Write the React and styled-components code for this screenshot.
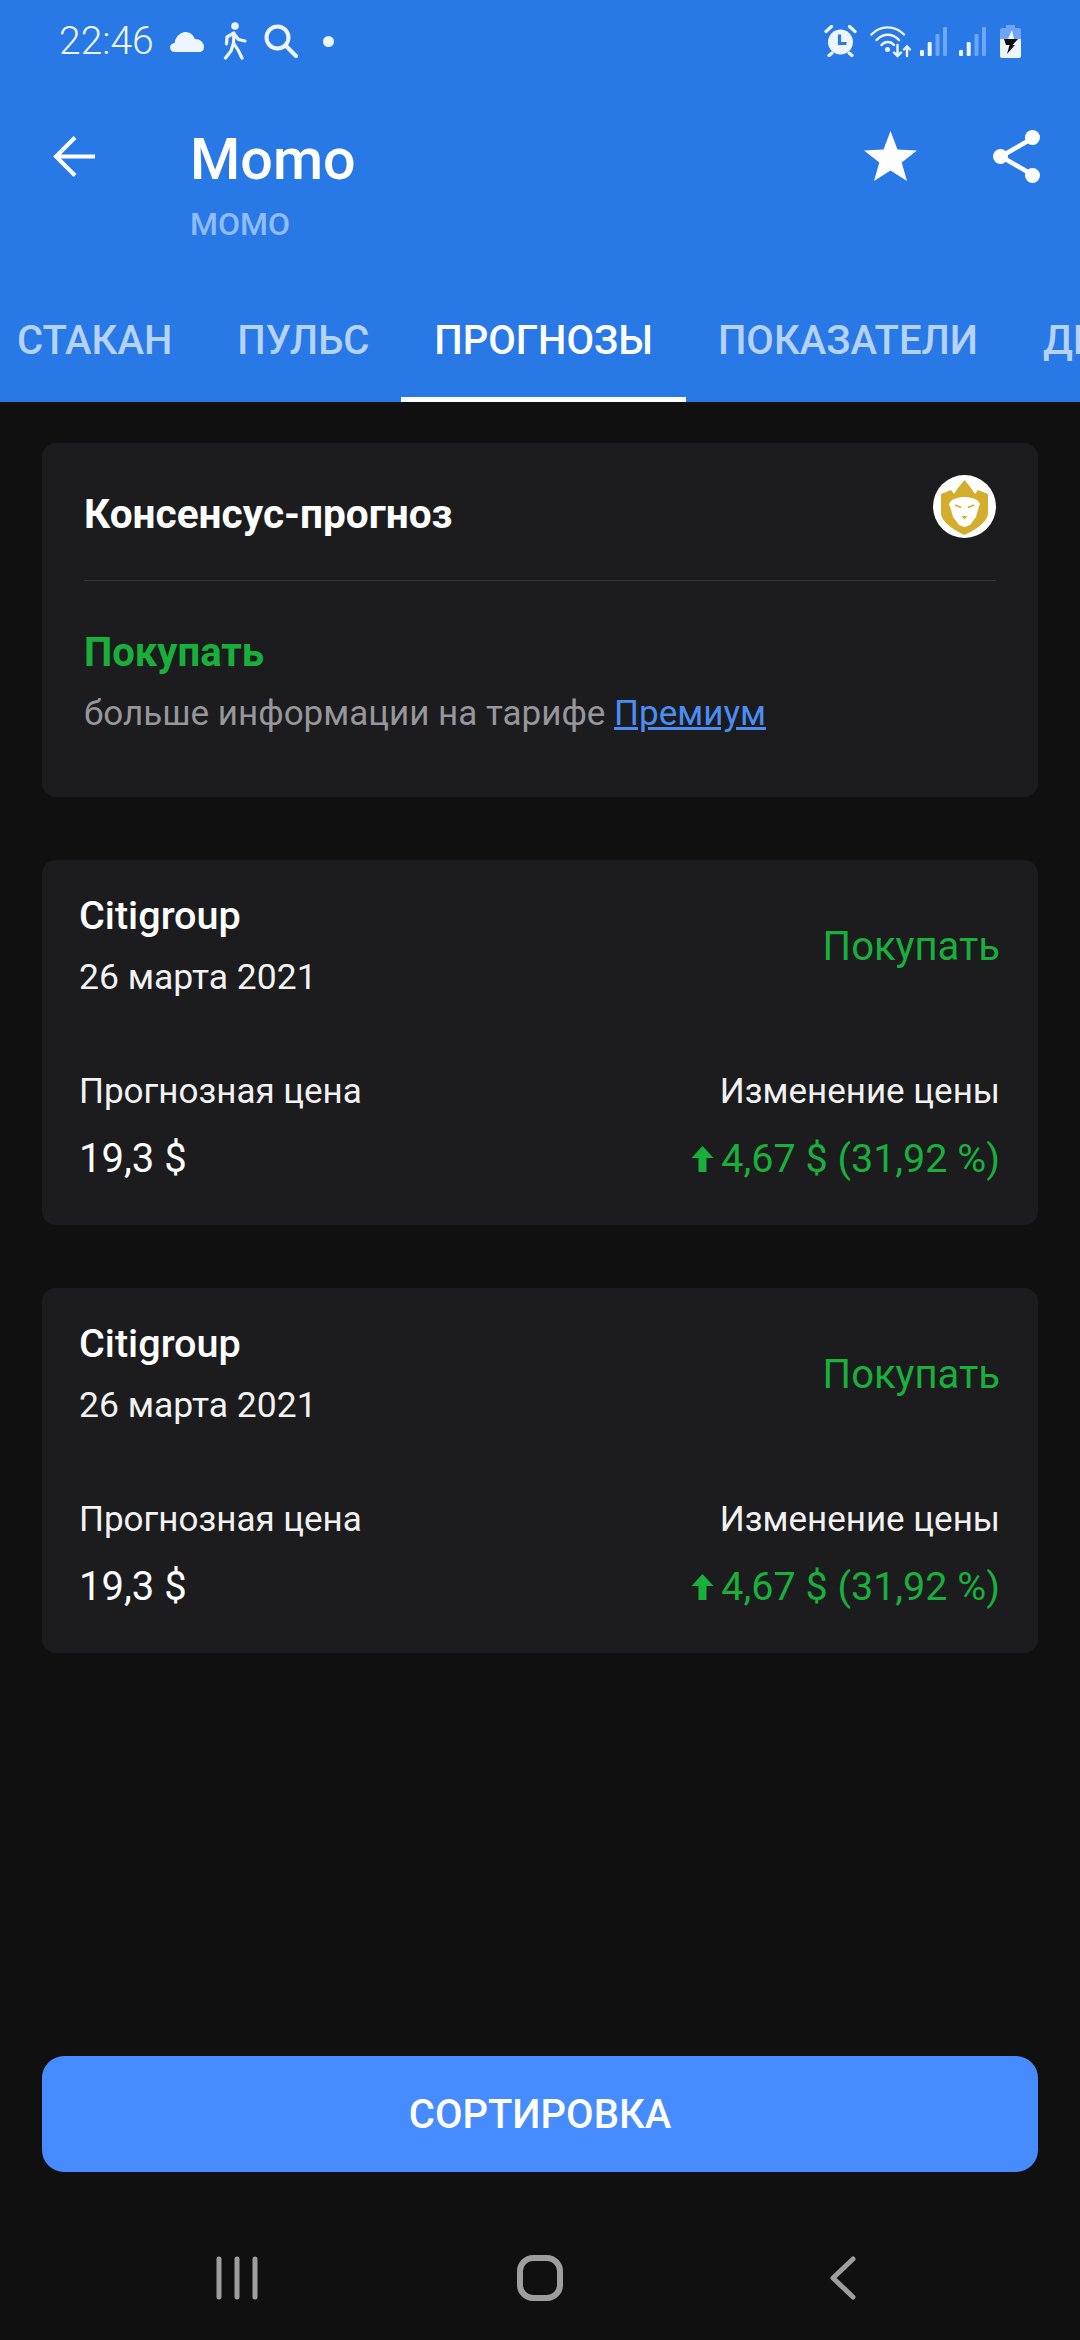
import React from 'react'
import styled, { createGlobalStyle } from 'styled-components'

const Global = createGlobalStyle`
html, body { margin: 0; padding: 0; background: #101010; }
* { box-sizing: border-box; }
`

const Page = styled.div`
width: 1080px;
height: 2340px;
display: flex;
flex-direction: column;
background: #101010;
font-family: Roboto, "Noto Sans", sans-serif;
overflow: hidden;
`
const Header = styled.header`
height: 402px;
background: #2879e6;
display: flex;
flex-direction: column;
flex-shrink: 0;
`
const StatusBar = styled.div`
height: 82px;
padding: 0 59px 0 59px;
display: flex;
align-items: center;
justify-content: space-between;
color: #eef5ff;
flex-shrink: 0;
`
const StatusGroup = styled.div`
display: flex;
align-items: center;
`
const Clock = styled.span`
font-size: 39px;
font-weight: 300;
width: 111px;
`
const Spaced = styled.span`
display: flex;
margin-left: ${p => p.$left || 0}px;
`
const Toolbar = styled.div`
height: 198px;
flex-shrink: 0;
display: flex;
align-items: flex-start;
padding: 37px 40px 0 53px;
`
const IconSlot = styled.div`
width: 137px;
height: 74px;
display: flex;
align-items: center;
flex-shrink: 0;
`
const TitleBlock = styled.div`
flex: 1;
display: flex;
flex-direction: column;
margin-top: 4px;
`
const Title = styled.div`
font-size: 57.5px;
font-weight: 500;
color: #fff;
line-height: 74px;
`
const Subtitle = styled.div`
font-size: 32px;
font-weight: 500;
color: #8fbcfb;
line-height: 40px;
margin-top: 7px;
`
const ToolActions = styled.div`
display: flex;
align-items: center;
gap: 76px;
height: 74px;
`
const Tabs = styled.div`
height: 122px;
display: flex;
padding-left: 17px;
gap: 65px;
overflow: hidden;
`
const Tab = styled.div`
position: relative;
flex-shrink: 0;
font-size: 40px;
font-weight: 500;
line-height: 122px;
height: 122px;
color: ${p => (p.$active ? '#fff' : '#b5d2fb')};
${p => p.$active && `
&::after {
  content: "";
  position: absolute;
  left: -33px;
  right: -33px;
  bottom: 0;
  height: 5px;
  background: #fff;
}
`}
`
const Content = styled.main`
flex: 1;
display: flex;
flex-direction: column;
padding: 41px 42px 0;
`
const Card = styled.section`
background: #1c1c1f;
border-radius: 14px;
margin-bottom: 63px;
`
const ForecastCard = styled(Card)`
height: 365px;
padding: 33px 38px 0 37px;
`
const ConsensusTop = styled.div`
height: 138px;
margin: 0 42px;
padding-top: 4px;
display: flex;
align-items: center;
justify-content: space-between;
border-bottom: 1px solid #333337;
`
const ConsensusTitle = styled.div`
font-size: 40.6px;
font-weight: 700;
color: #fff;
`
const LogoWrap = styled.div`
display: flex;
margin-bottom: 14px;
`
const ConsensusBody = styled.div`
padding: 49px 42px 60px;
`
const Verdict = styled.div`
font-size: 40px;
font-weight: 700;
color: #18b03b;
line-height: 46px;
`
const InfoLine = styled.div`
font-size: 35px;
color: #96969b;
line-height: 46px;
margin-top: 15px;
`
const PremiumLink = styled.a`
color: #4a8df3;
text-decoration: underline;
`
const Row = styled.div`
display: flex;
justify-content: space-between;
align-items: ${p => p.$align || 'flex-start'};
margin-top: ${p => p.$top || 0}px;
`
const Col = styled.div`
display: flex;
flex-direction: column;
align-items: ${p => (p.$right ? 'flex-end' : 'flex-start')};
`
const Broker = styled.div`
font-size: 39.6px;
font-weight: 500;
color: #fff;
line-height: 46px;
`
const Line = styled.div`
font-size: ${p => p.$size || 35}px;
color: #f2f2f2;
line-height: 46px;
margin-top: ${p => p.$top || 0}px;
`
const Recommendation = styled.div`
font-size: 40px;
color: #18b03b;
line-height: 46px;
`
const Price = styled.div`
font-size: 40px;
color: #fff;
line-height: 46px;
margin-top: 21px;
`
const Change = styled(Price)`
font-size: 39.5px;
color: #18b03b;
display: flex;
align-items: center;
gap: 7px;
`
const SortButton = styled.button`
width: 996px;
height: 116px;
margin: 0 42px;
border: none;
border-radius: 22px;
background: #468cff;
color: #fff;
font-family: inherit;
font-size: 40px;
font-weight: 500;
flex-shrink: 0;
`
const NavBar = styled.nav`
height: 168px;
flex-shrink: 0;
display: flex;
justify-content: center;
padding-top: 44px;
`
const NavItem = styled.div`
width: 303px;
display: flex;
justify-content: center;
align-items: center;
height: 124px;
`
const Dot = styled.span`
width: 11px;
height: 11px;
border-radius: 50%;
background: #eef5ff;
margin-left: 25px;
`

const Cloud = () => (
  <svg width="34" height="21" viewBox="0 0 34 21">
    <path d="M5 21C2 21 0 19 0 16.500 0 14 2 12.300 4.600 12 5.400 6 10 1 15.500 1 20 1 23.500 3.800 24.800 8 29.800 7.900 34 11.300 34 16 34 19 32 21 29 21Z" fill="#eef5ff" />
  </svg>
)
const Walker = () => (
  <svg width="24" height="38" viewBox="0 0 24 38" fill="none" stroke="#eef5ff" strokeWidth="3.200" strokeLinecap="round" strokeLinejoin="round">
    <circle cx="12" cy="4" r="3.800" fill="#eef5ff" stroke="none" />
    <path d="M11 11 4 15 3.500 22M11 11 10.500 21 15 28 19 36M10.500 21 8 29 2.500 36M12 13 15.500 17.500 22 19" />
  </svg>
)
const Lens = () => (
  <svg width="34" height="34" viewBox="0 0 34 34" fill="none" stroke="#eef5ff" strokeWidth="4" strokeLinecap="round">
    <circle cx="13.500" cy="13.500" r="11" />
    <path d="M21.500 21.500 32 32" />
  </svg>
)
const Alarm = () => (
  <svg width="33" height="32" viewBox="0 0 33 32">
    <circle cx="16.500" cy="17" r="12.500" fill="#eef5ff" />
    <path d="M2 6.500 7.500 1.500M31 6.500 25.500 1.500M5 30.500 8 28M28 30.500 25 28" stroke="#eef5ff" strokeWidth="3.200" strokeLinecap="round" />
    <path d="M15.500 9.500V18.500H22.500" stroke="#2879e6" strokeWidth="3.200" fill="none" />
  </svg>
)
const Wifi = () => (
  <svg width="41" height="33" viewBox="0 0 41 33" fill="none" stroke="#eef5ff" strokeWidth="2.400" strokeLinecap="round">
    <path d="M1.500 9.500C10 0 25 0 34 9.500M6.500 15C13 8 22.500 8 29 15M11.500 20C15 16 20.500 16 24 20" />
    <circle cx="17.500" cy="24.500" r="2.500" fill="#eef5ff" stroke="none" />
    <path d="M27.500 20V31M24 27.500 27.500 31 31 27.500M37 31V21.500M34 24.500 37 21.500 40 24.500" />
  </svg>
)
const Signal = () => (
  <svg width="27" height="29" viewBox="0 0 27 29">
    <rect x="0" y="23" width="4" height="6" rx="1" fill="#eef5ff" />
    <rect x="7.700" y="15" width="4" height="14" rx="1" fill="#eef5ff" />
    <rect x="15.500" y="7" width="4" height="22" rx="1" fill="#6ea6f5" />
    <rect x="23" y="0" width="4" height="29" rx="1" fill="#6ea6f5" />
  </svg>
)
const Battery = () => (
  <svg width="21" height="33" viewBox="0 0 21 33">
    <path d="M6 0H15V3H19C20 3 21 4 21 5V14H0V5C0 4 1 3 2 3H6Z" fill="#6ea6f5" />
    <path d="M0 14H21V31C21 32 20 33 19 33H2C1 33 0 32 0 31Z" fill="#eef5ff" />
    <path d="M4 14H18L12.500 20H15L7 29 9.500 20H6Z" fill="#111" />
    <path d="M12 5 8 14H14Z" fill="#eef5ff" />
  </svg>
)
const BackArrow = () => (
  <svg width="42" height="41" viewBox="0 0 42 41" fill="none" stroke="#fff" strokeWidth="4">
    <path d="M42 20.500H3M22 1.500 3 20.500 22 39.500" />
  </svg>
)
const Star = () => (
  <svg width="53" height="50" viewBox="0 0 53 50">
    <path d="M26.500 0 33.500 18.500 53 19.500 37.700 31.500 43 50 26.500 39.500 10 50 15.300 31.500 0 19.500 19.500 18.500Z" fill="#fff" />
  </svg>
)
const Share = () => (
  <svg width="47" height="53" viewBox="0 0 47 53" fill="none">
    <path d="M39 8.500 8 26.500 39 44.500" stroke="#fff" strokeWidth="4.500" />
    <circle cx="39.500" cy="7.500" r="7.500" fill="#fff" />
    <circle cx="7.500" cy="26.500" r="7.500" fill="#fff" />
    <circle cx="39.500" cy="45.500" r="7.500" fill="#fff" />
  </svg>
)
const Lion = () => (
  <svg width="63" height="63" viewBox="0 0 63 63">
    <circle cx="31.500" cy="31.500" r="31.500" fill="#fff" />
    <path d="M8 19 18 15 21 19 25 13 31.500 5 38 13 42 19 45 15 55 19V38C55 47 42 55 31.500 60 21 55 8 47 8 38Z" fill="#d3ad2b" />
    <path d="M31.500 22C38 22 45 24 47 29 45 34 44 38 43 42L37 50 31.500 52 26 50 20 42C19 38 18 34 16 29 18 24 25 22 31.500 22Z" fill="#fff" />
    <path d="M22 30 28 32.500M41 30 35 32.500" stroke="#d3ad2b" strokeWidth="1.800" />
    <path d="M28.500 41H34.500L31.500 44.500Z" fill="#d3ad2b" />
  </svg>
)
const UpArrow = () => (
  <svg width="23" height="28" viewBox="0 0 23 28">
    <path d="M11.500 1 22.500 13H15.500V27H7.500V13H.5Z" fill="#18b03b" />
  </svg>
)
const Recents = () => (
  <svg width="42" height="44" viewBox="0 0 42 44" stroke="#9e9e9e" strokeWidth="5" strokeLinecap="round">
    <path d="M3 3V41M21 3V41M39 3V41" />
  </svg>
)
const Home = () => (
  <svg width="46" height="46" viewBox="0 0 46 46" fill="none">
    <rect x="3" y="3" width="40" height="40" rx="13" stroke="#9e9e9e" strokeWidth="6" />
  </svg>
)
const NavBack = () => (
  <svg width="26" height="44" viewBox="0 0 26 44" fill="none" stroke="#9e9e9e" strokeWidth="5" strokeLinecap="round" strokeLinejoin="round">
    <path d="M23 3 3 22 23 41" />
  </svg>
)

const TABS = ['СТАКАН', 'ПУЛЬС', 'ПРОГНОЗЫ', 'ПОКАЗАТЕЛИ', 'ДИВИДЕНДЫ']

const Forecast = () => (
  <ForecastCard>
    <Row $align="center">
      <Col>
        <Broker>Citigroup</Broker>
        <Line $top={15} $size={35.5}>26 марта 2021</Line>
      </Col>
      <Recommendation>Покупать</Recommendation>
    </Row>
    <Row $top={69}>
      <Col>
        <Line>Прогнозная цена</Line>
        <Price>19,3 $</Price>
      </Col>
      <Col $right>
        <Line>Изменение цены</Line>
        <Change><UpArrow />4,67 $ (31,92 %)</Change>
      </Col>
    </Row>
  </ForecastCard>
)

const App = () => {
  return (
    <Page>
      <Global />
      <Header>
        <StatusBar>
          <StatusGroup>
            <Clock>22:46</Clock>
            <Cloud />
            <Spaced $left={19}><Walker /></Spaced>
            <Spaced $left={17}><Lens /></Spaced>
            <Dot />
          </StatusGroup>
          <StatusGroup>
            <Alarm />
            <Spaced $left={13}><Wifi /></Spaced>
            <Spaced $left={9}><Signal /></Spaced>
            <Spaced $left={12}><Signal /></Spaced>
            <Spaced $left={14}><Battery /></Spaced>
          </StatusGroup>
        </StatusBar>
        <Toolbar>
          <IconSlot><BackArrow /></IconSlot>
          <TitleBlock>
            <Title>Momo</Title>
            <Subtitle>MOMO</Subtitle>
          </TitleBlock>
          <ToolActions>
            <Star />
            <Share />
          </ToolActions>
        </Toolbar>
        <Tabs>
          {TABS.map(t => <Tab key={t} $active={t === 'ПРОГНОЗЫ'}>{t}</Tab>)}
        </Tabs>
      </Header>
      <Content>
        <Card>
          <ConsensusTop>
            <ConsensusTitle>Консенсус-прогноз</ConsensusTitle>
            <LogoWrap><Lion /></LogoWrap>
          </ConsensusTop>
          <ConsensusBody>
            <Verdict>Покупать</Verdict>
            <InfoLine>больше информации на тарифе <PremiumLink>Премиум</PremiumLink></InfoLine>
          </ConsensusBody>
        </Card>
        <Forecast />
        <Forecast />
      </Content>
      <SortButton>СОРТИРОВКА</SortButton>
      <NavBar>
        <NavItem><Recents /></NavItem>
        <NavItem><Home /></NavItem>
        <NavItem><NavBack /></NavItem>
      </NavBar>
    </Page>
  )
}

export default App
